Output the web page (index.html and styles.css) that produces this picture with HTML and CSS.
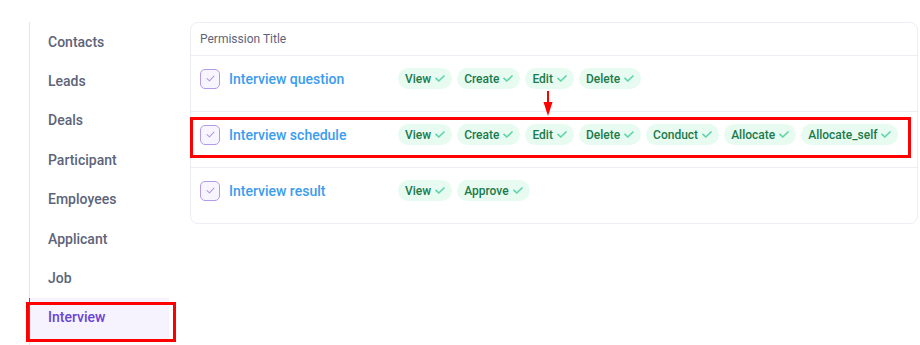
FILE: index.html
```html
<!DOCTYPE html>
<html lang="en">
<head>
    <meta charset="UTF-8">
    <meta name="viewport" content="width=device-width, initial-scale=1.0">
    <title>Permissions</title>
    <link rel="stylesheet" href="styles.css">
</head>
<body>
    <div class="page">
        <!-- Module menu -->
        <aside class="side-menu">
            <nav class="menu-list">
                <a class="menu-item">Contacts</a>
                <a class="menu-item">Leads</a>
                <a class="menu-item">Deals</a>
                <a class="menu-item">Participant</a>
                <a class="menu-item">Employees</a>
                <a class="menu-item">Applicant</a>
                <a class="menu-item">Job</a>
                <a class="menu-item active">Interview</a>
            </nav>
        </aside>

        <!-- Permission table -->
        <main class="content">
            <div class="perm-card">
                <div class="perm-header">Permission Title</div>

                <div class="perm-row">
                    <div class="perm-title">
                        <span class="perm-check">
                            <svg viewBox="0 0 10 8" width="9" height="7"><path d="M1 4.2 L3.8 6.8 L9 1.2" fill="none" stroke="#b29ce6" stroke-width="1.2" stroke-linecap="round" stroke-linejoin="round"/></svg>
                        </span>
                        <span class="perm-name">Interview question</span>
                    </div>
                    <div class="perm-tags">
                        <span class="tag">View<svg class="tick" viewBox="0 0 10 7"><path d="M1 3.4 L3.8 6 L9 1"/></svg></span>
                        <span class="tag">Create<svg class="tick" viewBox="0 0 10 7"><path d="M1 3.4 L3.8 6 L9 1"/></svg></span>
                        <span class="tag">Edit<svg class="tick" viewBox="0 0 10 7"><path d="M1 3.4 L3.8 6 L9 1"/></svg></span>
                        <span class="tag">Delete<svg class="tick" viewBox="0 0 10 7"><path d="M1 3.4 L3.8 6 L9 1"/></svg></span>
                    </div>
                </div>

                <div class="perm-row">
                    <div class="perm-title">
                        <span class="perm-check">
                            <svg viewBox="0 0 10 8" width="9" height="7"><path d="M1 4.2 L3.8 6.8 L9 1.2" fill="none" stroke="#b29ce6" stroke-width="1.2" stroke-linecap="round" stroke-linejoin="round"/></svg>
                        </span>
                        <span class="perm-name">Interview schedule</span>
                    </div>
                    <div class="perm-tags">
                        <span class="tag">View<svg class="tick" viewBox="0 0 10 7"><path d="M1 3.4 L3.8 6 L9 1"/></svg></span>
                        <span class="tag">Create<svg class="tick" viewBox="0 0 10 7"><path d="M1 3.4 L3.8 6 L9 1"/></svg></span>
                        <span class="tag">Edit<svg class="tick" viewBox="0 0 10 7"><path d="M1 3.4 L3.8 6 L9 1"/></svg></span>
                        <span class="tag">Delete<svg class="tick" viewBox="0 0 10 7"><path d="M1 3.4 L3.8 6 L9 1"/></svg></span>
                        <span class="tag">Conduct<svg class="tick" viewBox="0 0 10 7"><path d="M1 3.4 L3.8 6 L9 1"/></svg></span>
                        <span class="tag">Allocate<svg class="tick" viewBox="0 0 10 7"><path d="M1 3.4 L3.8 6 L9 1"/></svg></span>
                        <span class="tag">Allocate_self<svg class="tick" viewBox="0 0 10 7"><path d="M1 3.4 L3.8 6 L9 1"/></svg></span>
                    </div>
                </div>

                <div class="perm-row">
                    <div class="perm-title">
                        <span class="perm-check">
                            <svg viewBox="0 0 10 8" width="9" height="7"><path d="M1 4.2 L3.8 6.8 L9 1.2" fill="none" stroke="#b29ce6" stroke-width="1.2" stroke-linecap="round" stroke-linejoin="round"/></svg>
                        </span>
                        <span class="perm-name">Interview result</span>
                    </div>
                    <div class="perm-tags">
                        <span class="tag">View<svg class="tick" viewBox="0 0 10 7"><path d="M1 3.4 L3.8 6 L9 1"/></svg></span>
                        <span class="tag">Approve<svg class="tick" viewBox="0 0 10 7"><path d="M1 3.4 L3.8 6 L9 1"/></svg></span>
                    </div>
                </div>
            </div>
        </main>

        <!-- Screenshot annotations -->
        <div class="mark mark-menu"></div>
        <div class="mark mark-row"></div>
        <svg class="mark-arrow" viewBox="0 0 10 26" width="10" height="26">
            <path d="M5 0 V14" stroke="#f00" stroke-width="2"/>
            <path d="M0.5 11 L9.5 11 L5 25 Z" fill="#f00"/>
        </svg>
    </div>
</body>
</html>
```

FILE: styles.css
```css
* {
    margin: 0;
    padding: 0;
    box-sizing: border-box;
}

body {
    font-family: Roboto, 'Noto Sans', sans-serif;
    background-color: white;
    color: #5b6278;
}

.page {
    position: relative;
    display: flex;
    height: 345px;
    overflow: hidden;
}

/* Side menu */
.side-menu {
    width: 190px;
    padding: 22px 0 0 29px;
    flex-shrink: 0;
}

.menu-list {
    display: flex;
    flex-direction: column;
    width: 140px;
    height: 100%;
    border-left: 1px solid #e4e6ee;
}

.menu-item {
    display: flex;
    align-items: center;
    height: 39.4px;
    padding-left: 18px;
    font-size: 14px;
    font-weight: 500;
    color: #5d6479;
}

.menu-item.active {
    color: #6a42d6;
    background-color: #f6f3fe;
    box-shadow: inset 1px 0 0 #6a42d6;
    margin-left: -1px;
    padding-left: 19px;
    padding-bottom: 3px;
    height: 42px;
}

/* Permission card */
.content {
    width: 728px;
    padding-top: 22px;
}

.perm-card {
    border: 1px solid #eceef3;
    border-radius: 8px;
}

.perm-header {
    height: 33px;
    display: flex;
    align-items: center;
    padding-left: 9px;
    font-size: 12px;
    color: #5d6479;
    border-bottom: 1px solid #eceef3;
}

.perm-row {
    display: flex;
    align-items: center;
    padding: 12px 9px 22px;
    border-bottom: 1px solid #eceef3;
}

.perm-row:last-child {
    border-bottom: none;
}

.perm-title {
    width: 198px;
    flex-shrink: 0;
    display: flex;
    align-items: center;
    gap: 9px;
}

.perm-check {
    width: 20px;
    height: 20px;
    display: flex;
    align-items: center;
    justify-content: center;
    border: 1.5px solid #b49be9;
    border-radius: 5px;
    background-color: #f8f5ff;
}

.perm-name {
    font-size: 14px;
    font-weight: 500;
    color: #3b9cef;
}

.perm-tags {
    display: flex;
    gap: 5px;
}

.tag {
    display: flex;
    align-items: center;
    gap: 4px;
    height: 21px;
    padding: 0 7px;
    border-radius: 11px;
    background-color: #e8fbf1;
    color: #1a7a4c;
    font-size: 12px;
    font-weight: 500;
}

.tick {
    width: 10px;
    height: 7px;
    fill: none;
    stroke: #5fd4ab;
    stroke-width: 1.7;
    stroke-linecap: round;
    stroke-linejoin: round;
}

/* Annotations */
.mark {
    position: absolute;
    border: 3px solid #f00;
}

.mark-menu {
    left: 26px;
    top: 302px;
    width: 150px;
    height: 40px;
}

.mark-row {
    left: 190px;
    top: 117px;
    width: 721px;
    height: 41px;
}

.mark-arrow {
    position: absolute;
    left: 543px;
    top: 91px;
}
```
